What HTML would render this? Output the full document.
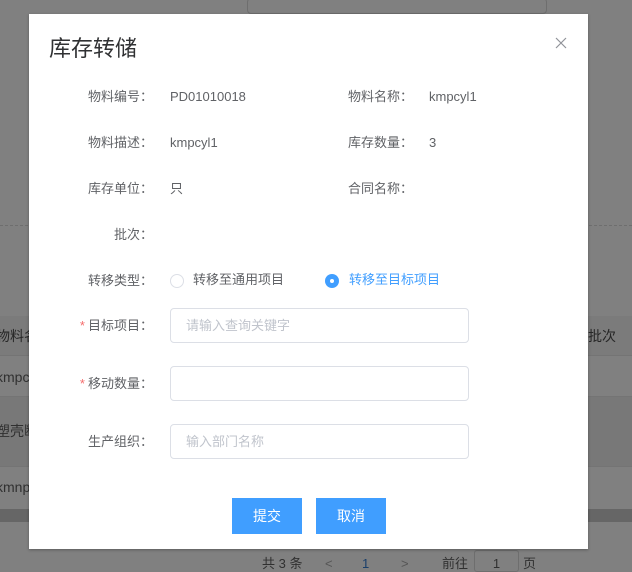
<!DOCTYPE html>
<html><head><meta charset="utf-8"><style>
*{margin:0;padding:0;box-sizing:border-box}
body{width:632px;height:567px;overflow:hidden;background:#808080;position:relative;font-family:"Liberation Sans","Noto Sans CJK SC",sans-serif;font-size:13px;color:#606266;line-height:16px}
.a{position:absolute;white-space:nowrap}
.bg{position:absolute;left:0;width:632px}
.dlg{position:absolute;left:29px;top:14px;width:559px;height:535px;background:#fff;box-shadow:0 1px 3px rgba(0,0,0,.3)}
.lbl{position:absolute;white-space:nowrap;text-align:right;width:100px}
.inp{position:absolute;left:141px;width:299px;height:35px;border:1px solid #dcdfe6;border-radius:4px;color:#c0c4cc;padding-left:15px;line-height:33px}
.btn{position:absolute;top:484px;width:70px;height:36px;background:#409eff;color:#fff;text-align:center;line-height:36px;font-size:14px}
.req{color:#f56c6c;margin-right:3px}
</style></head><body>
<div class="a" style="left:247px;top:-2px;width:300px;height:16px;border:1px solid #6e6e6e;border-radius:4px"></div>
<div class="bg" style="top:225px;border-top:1px dashed #6e6e6e"></div>
<div class="bg" style="top:316px;height:40px;background:#7b7b7b;border-bottom:1px solid #747474"></div>
<div class="bg" style="top:396px;height:70px;background:#787878;border-top:1px solid #747474"></div>
<div class="bg" style="top:466px;height:42px;border-top:1px solid #747474"></div>
<div class="bg" style="top:509px;height:13px;background:#666"></div>
<div class="a" style="left:-4px;top:328px;color:#262626;font-size:14px">物料名</div>
<div class="a" style="left:588px;top:328px;color:#262626;font-size:14px">批次</div>
<div class="a" style="left:-4px;top:369px;color:#303030;font-size:14px">kmpc</div>
<div class="a" style="left:-4px;top:423px;color:#303030;font-size:14px">塑壳断</div>
<div class="a" style="left:-4px;top:479px;color:#303030;font-size:14px">kmnp</div>
<div class="a" style="left:262px;top:556px;color:#303030">共 3 条</div>
<div class="a" style="left:325px;top:556px;color:#555">&lt;</div>
<div class="a" style="left:362px;top:556px;color:#1a3f6a">1</div>
<div class="a" style="left:401px;top:556px;color:#555">&gt;</div>
<div class="a" style="left:442px;top:556px;color:#303030">前往</div>
<div class="a" style="left:474px;top:550px;width:45px;height:22px;border:1px solid #6e6e6e;border-radius:3px;text-align:center;color:#303030;padding-top:5px">1</div>
<div class="a" style="left:523px;top:556px;color:#303030">页</div>

<div class="dlg">
<div class="a" style="left:20px;top:21px;font-size:22px;line-height:28px;color:#303133">库存转储</div>
<svg class="a" style="left:526px;top:23px" width="12" height="12" viewBox="0 0 12 12"><path d="M1 1L11 11M11 1L1 11" stroke="#909399" stroke-width="1.2"/></svg>

<div class="lbl" style="left:24px;top:75px">物料编号：</div><div class="a" style="left:141px;top:75px">PD01010018</div>
<div class="lbl" style="left:284px;top:75px">物料名称：</div><div class="a" style="left:400px;top:75px">kmpcyl1</div>
<div class="lbl" style="left:24px;top:121px">物料描述：</div><div class="a" style="left:141px;top:121px">kmpcyl1</div>
<div class="lbl" style="left:284px;top:121px">库存数量：</div><div class="a" style="left:400px;top:121px">3</div>
<div class="lbl" style="left:24px;top:167px">库存单位：</div><div class="a" style="left:141px;top:167px">只</div>
<div class="lbl" style="left:284px;top:167px">合同名称：</div>
<div class="lbl" style="left:24px;top:213px">批次：</div>
<div class="lbl" style="left:24px;top:259px">转移类型：</div>
<div class="a" style="left:141px;top:260px;width:14px;height:14px;border:1px solid #dcdfe6;border-radius:50%"></div>
<div class="a" style="left:164px;top:258px">转移至通用项目</div>
<div class="a" style="left:296px;top:260px;width:14px;height:14px;background:#409eff;border-radius:50%"><div style="width:4px;height:4px;background:#fff;border-radius:50%;margin:5px"></div></div>
<div class="a" style="left:320px;top:258px;color:#409eff">转移至目标项目</div>

<div class="lbl" style="left:24px;top:304px"><span class="req">*</span>目标项目：</div>
<div class="inp" style="top:294px">请输入查询关键字</div>
<div class="lbl" style="left:24px;top:362px"><span class="req">*</span>移动数量：</div>
<div class="inp" style="top:352px"></div>
<div class="lbl" style="left:24px;top:420px">生产组织：</div>
<div class="inp" style="top:410px">输入部门名称</div>

<div class="btn" style="left:203px">提交</div>
<div class="btn" style="left:287px">取消</div>
</div>
</body></html>
